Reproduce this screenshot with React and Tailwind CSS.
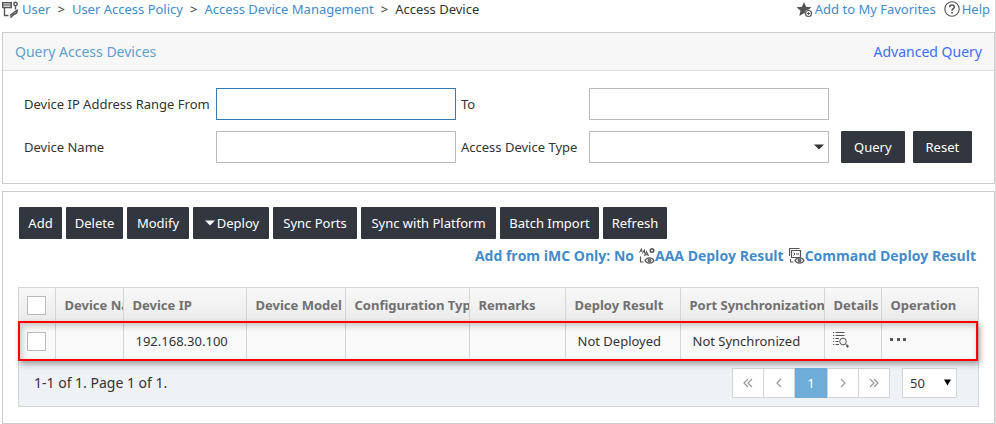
import React from "react";

const toolButtons = [
  { label: "Add", width: "w-[43px]" },
  { label: "Delete", width: "w-[57px]" },
  { label: "Modify", width: "w-[62px]" },
  { label: "Deploy", width: "w-[76px]", menu: true },
  { label: "Sync Ports", width: "w-[84px]" },
  { label: "Sync with Platform", width: "w-[135px]" },
  { label: "Batch Import", width: "w-[99px]" },
  { label: "Refresh", width: "w-[64px]" },
];

const columns = [
  "Device Name",
  "Device IP",
  "Device Model",
  "Configuration Type",
  "Remarks",
  "Deploy Result",
  "Port Synchronization",
  "Details",
  "Operation",
];

function Caret({ className }) {
  return (
    <svg viewBox="0 0 10 6" preserveAspectRatio="none" className={className} aria-hidden="true">
      <path d="M0 0.5h10L5 5.5z" fill="currentColor" />
    </svg>
  );
}

function PageIcon() {
  return (
    <svg viewBox="0 0 18 18" className="h-[18px] w-[18px] text-[#555]" fill="none" stroke="currentColor" aria-hidden="true">
      <path d="M2.500 8V15.500H6.500M0.700 2.700h8.600v4.800H.7z" strokeWidth="1.400" />
      <path d="M1 5h8" strokeWidth="1.200" />
      <circle cx="13.500" cy="4" r="1.700" strokeWidth="1.400" />
      <path d="M13.500 6v3.500" strokeWidth="1.400" />
      <path d="M15.500 9.500l-1 3.500-3.500 2-2.500 2.500" strokeWidth="1.700" />
      <path d="M8 15.500l6.500-5" strokeWidth="1.500" />
    </svg>
  );
}

function StarIcon() {
  return (
    <svg viewBox="0 0 17 17" className="h-[17px] w-[17px]" aria-hidden="true">
      <path d="M8 1l2.100 4.800 5.400.5-4 3.500 1.200 5.200L8 12.300 3.300 15l1.200-5.200-4-3.500 5.400-.5z" fill="#555" />
      <circle cx="12.500" cy="12.500" r="3.800" fill="#fff" />
      <circle cx="12.500" cy="12.500" r="3" fill="none" stroke="#555" strokeWidth="1.200" />
      <path d="M12.500 11v3M11 12.500h3" stroke="#555" strokeWidth="1" />
    </svg>
  );
}

function HelpIcon() {
  return (
    <svg viewBox="0 0 16 16" className="h-4 w-4" fill="none" stroke="#555" aria-hidden="true">
      <circle cx="8" cy="8" r="7.200" strokeWidth="1.100" />
      <path d="M5.700 6.200C5.700 3.200 10.300 3.300 10.300 6c0 1.700-2.300 1.800-2.300 3.700" strokeWidth="1.600" />
      <path d="M8 11v1.600" strokeWidth="1.700" />
    </svg>
  );
}

function Eye() {
  return (
    <g>
      <path d="M6 12.500C8 9 13 9 15 12.500C13 16 8 16 6 12.500z" fill="#fff" stroke="#555" strokeWidth="1.300" />
      <circle cx="10.500" cy="12.500" r="1.500" fill="#777" stroke="#555" />
    </g>
  );
}

function AaaIcon() {
  return (
    <svg viewBox="0 0 16 16" className="h-4 w-4" fill="none" stroke="#555" aria-hidden="true">
      <path d="M.5 4.500L2.500 .5L3 4M1.500 3h1.500M3.500 5.500L5.500 1.500v4" strokeWidth="1" />
      <path d="M5.500 8l2-4.500 2 4.500M6.500 6.800h2.500" strokeWidth="1.100" />
      <circle cx="13" cy="2.500" r="1.700" strokeWidth="1.600" />
      <path d="M1.500 8.500v5.500H4.500" strokeWidth="1.200" />
      <Eye />
    </svg>
  );
}

function CommandIcon() {
  return (
    <svg viewBox="0 0 16 16" className="h-4 w-4" fill="none" stroke="#555" aria-hidden="true">
      <path d="M.5 8V.5h10M1.500 11v3H4.500" strokeWidth="1.100" />
      <path d="M2.500 2.500h9v7h-9z" strokeWidth="1.200" />
      <path d="M4.500 4.500l1.500 1.500-1.500 1.500M7 6h3" strokeWidth="1" />
      <Eye />
    </svg>
  );
}

function DetailsIcon() {
  return (
    <svg viewBox="0 0 17 17" className="h-[17px] w-[17px]" fill="none" stroke="#555" aria-hidden="true">
      <path d="M1 1.500h1.200M1 4.500h1.200M1 7.500h1.200M1 10.500h1.200M1 13.500h1.200M3.500 1.500h9M3.500 4.500h9M3.500 7.500h3.500M3.500 10.500h3M3.500 13.500h3.500" strokeWidth="1" />
      <circle cx="11" cy="10.500" r="3.300" strokeWidth="1" />
      <path d="M13.500 13l2 2M15.500 13.700v3M14 15.200h3" strokeWidth="1" />
    </svg>
  );
}

function Chevron({ double, right }) {
  return (
    <svg viewBox="0 0 10 10" className="h-[10px] w-[10px]" fill="none" stroke="#999" strokeWidth="1.200" aria-hidden="true">
      {right ? (
        <path d={double ? "M1 1l4 4-4 4M5 1l4 4-4 4" : "M3 1l4 4-4 4"} />
      ) : (
        <path d={double ? "M5 1L1 5l4 4M9 1L5 5l4 4" : "M7 1L3 5l4 4"} />
      )}
    </svg>
  );
}

const darkButton = "flex h-8 items-center justify-center rounded-[1px] bg-[#32363f] text-white whitespace-nowrap";
const textField = "h-8 w-full border border-[#bbb] bg-white px-2 outline-none";
const tick = "block h-[19px] w-[19px] appearance-none border border-[#bbb] bg-white";
const pageButton = "flex h-[30px] w-8 items-center justify-center border border-[#d5d5d5] bg-white";

export default function App() {
  return (
    <div className="border-r border-[#ddd] pl-[2px] font-['Noto_Sans','Open_Sans',sans-serif] text-[13px] leading-5 text-[#333]">
      <header className="flex h-8 items-start justify-between pr-[5px] leading-[18px]">
        <nav className="flex items-center gap-[7px]" aria-label="Breadcrumb">
          <span className="flex items-center gap-[2px]">
            <PageIcon />
            <a href="#user" className="text-[#428bca]">User</a>
          </span>
          <span>&gt;</span>
          <a href="#policy" className="text-[#428bca]">User Access Policy</a>
          <span>&gt;</span>
          <a href="#management" className="text-[#428bca]">Access Device Management</a>
          <span>&gt;</span>
          <span>Access Device</span>
        </nav>
        <div className="flex text-[#428bca]">
          <a href="#favorites" className="mr-2 flex items-center gap-[2px]">
            <StarIcon />
            Add to My Favorites
          </a>
          <a href="#help" className="flex items-center gap-[2px]">
            <HelpIcon />
            Help
          </a>
        </div>
      </header>

      <section className="border border-[#ccc]">
        <div className="flex h-[38px] items-center justify-between border-b border-[#ddd] bg-[#f7f7f7] px-3 text-[14px]">
          <h2 className="text-[#5f9fcc]">Query Access Devices</h2>
          <a href="#advanced" className="text-[#3d6dff]">Advanced Query</a>
        </div>
        <form className="grid grid-cols-[192px_240px_133px_240px_auto] items-center gap-y-[11px] pt-[17px] pb-5 pl-[21px]" onSubmit={(e) => e.preventDefault()}>
          <label htmlFor="ip-from">Device IP Address Range From</label>
          <input id="ip-from" className="h-8 w-full border border-[#337ab7] bg-white px-2 outline-none" />
          <label htmlFor="ip-to" className="ml-[5px]">To</label>
          <input id="ip-to" className={textField} />
          <span />
          <label htmlFor="device-name">Device Name</label>
          <input id="device-name" className={textField} />
          <label htmlFor="device-type" className="ml-[5px]">Access Device Type</label>
          <div className="relative">
            <select id="device-type" className="h-8 w-full appearance-none border border-[#bbb] bg-white px-2 outline-none">
              <option></option>
            </select>
            <Caret className="pointer-events-none absolute top-[13px] right-[5px] h-[6px] w-[10px]" />
          </div>
          <div className="ml-3 flex gap-2">
            <button type="submit" className={`${darkButton} px-[13px]`}>Query</button>
            <button type="reset" className={`${darkButton} px-[13px]`}>Reset</button>
          </div>
        </form>
      </section>

      <section className="mt-[7px] border border-[#ccc] px-[15px] pt-[15px] pb-4">
        <div className="ml-px flex gap-1">
          {toolButtons.map((b) => (
            <button key={b.label} type="button" className={`${darkButton} ${b.width}`}>
              {b.menu && <Caret className="mr-[2px] ml-[2px] h-[6px] w-[10px]" />}
              {b.label}
            </button>
          ))}
        </div>
        <div className="mt-[7px] flex justify-end gap-[5px] pr-[3px] font-['Open_Sans','Noto_Sans',sans-serif] text-[14px] font-bold text-[#428bca]">
          <a href="#imc">Add from iMC Only: No</a>
          <a href="#aaa" className="flex items-center"><AaaIcon />AAA Deploy Result</a>
          <a href="#command" className="flex items-center"><CommandIcon />Command Deploy Result</a>
        </div>

        <div className="relative mt-[21px] border border-[#d5d5d5]">
          <table className="w-full table-fixed border-collapse text-left">
            <colgroup>
              <col className="w-[36px]" />
              <col className="w-[68px]" />
              <col className="w-[123px]" />
              <col className="w-[99px]" />
              <col className="w-[124px]" />
              <col className="w-[96px]" />
              <col className="w-[115px]" />
              <col className="w-[144px]" />
              <col className="w-[57px]" />
              <col />
            </colgroup>
            <thead className="bg-linear-to-b from-[#f8f8f8] to-[#ebebeb] text-[#707070]">
              <tr className="h-[34px]">
                <th className="border-r border-[#d5d5d5] pl-2">
                  <input type="checkbox" aria-label="Select all" className={tick} />
                </th>
                {columns.map((c) => (
                  <th key={c} className="overflow-hidden border-r border-[#d5d5d5] pl-[9px] font-bold whitespace-nowrap last:border-r-0">{c}</th>
                ))}
              </tr>
            </thead>
            <tbody className="bg-[#f9f9f9]">
              <tr className="h-[38px]">
                <td className="border-r border-[#d5d5d5] pl-2">
                  <input type="checkbox" aria-label="Select 192.168.30.100" className={tick} />
                </td>
                <td className="border-r border-[#d5d5d5]" />
                <td className="border-r border-[#d5d5d5] pl-3">192.168.30.100</td>
                <td className="border-r border-[#d5d5d5]" />
                <td className="border-r border-[#d5d5d5]" />
                <td className="border-r border-[#d5d5d5]" />
                <td className="border-r border-[#d5d5d5] pl-3">Not Deployed</td>
                <td className="border-r border-[#d5d5d5] pl-3">Not Synchronized</td>
                <td className="border-r border-[#d5d5d5] pl-[7px]">
                  <button type="button" aria-label="Details" className="block pb-1"><DetailsIcon /></button>
                </td>
                <td className="pl-2">
                  <button type="button" aria-label="Operation" className="block pb-1">
                    <svg viewBox="0 0 17 3" className="h-[3px] w-[17px]" fill="#555" aria-hidden="true">
                      <path d="M0 0h3v3H0zM7 0h3v3H7zM13 0h3v3h-3z" />
                    </svg>
                  </button>
                </td>
              </tr>
            </tbody>
          </table>
          <div className="flex h-[46px] items-center bg-[#eef1f6] pr-[21px] pl-[15px]">
            <p className="flex-1 text-[14px]">1-1 of 1. Page 1 of 1.</p>
            <nav className="mr-3 flex" aria-label="Pages">
              <button type="button" aria-label="First page" className={`${pageButton} -mr-px`}><Chevron double /></button>
              <button type="button" aria-label="Previous page" className={pageButton}><Chevron /></button>
              <button type="button" aria-current="page" className="flex h-[30px] w-8 items-center justify-center bg-[#6eadd9] text-white">1</button>
              <button type="button" aria-label="Next page" className={`${pageButton} -mr-px`}><Chevron right /></button>
              <button type="button" aria-label="Last page" className={pageButton}><Chevron double right /></button>
            </nav>
            <div className="relative">
              <select aria-label="Rows per page" className="h-[30px] w-[55px] appearance-none border border-[#d5d5d5] bg-white pl-[7px] text-[13px] outline-none">
                <option>50</option>
              </select>
              <Caret className="pointer-events-none absolute top-[11px] right-[6px] h-[7px] w-[7px] text-black" />
            </div>
          </div>
          <div className="pointer-events-none absolute -left-px right-0 top-[33px] h-10 border-2 border-[#f00] shadow-[2px_3px_6px_rgba(0,0,0,0.35),inset_2px_3px_6px_rgba(0,0,0,0.2)]" />
        </div>
      </section>
    </div>
  );
}
